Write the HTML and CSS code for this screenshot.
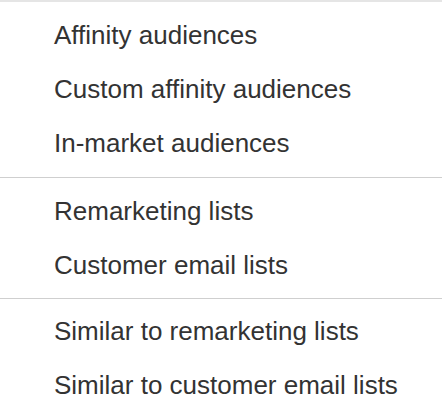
FILE: index.html
```html
<!DOCTYPE html>
<html>
<head>
<meta charset="utf-8">
<link rel="stylesheet" href="styles.css">
</head>
<body>
<div class="menu">
  <div class="section first">
    <div class="item">Affinity audiences</div>
    <div class="item">Custom affinity audiences</div>
    <div class="item">In-market audiences</div>
  </div>
  <div class="section">
    <div class="item">Remarketing lists</div>
    <div class="item">Customer email lists</div>
  </div>
  <div class="section last">
    <div class="item">Similar to remarketing lists</div>
    <div class="item">Similar to customer email lists</div>
  </div>
</div>
</body>
</html>
```
FILE: styles.css
```css
html, body {
  margin: 0;
  padding: 0;
  background: #fff;
}
.menu {
  width: 442px;
  border-top: 2px solid #e5e5e5;
  font-family: "Liberation Sans", Arial, sans-serif;
  font-size: 26px;
  color: #333;
}
.section {
  padding: 6px 0 6px 0;
  border-bottom: 1px solid #cfcfcf;
}
.section.first {
  padding-bottom: 7px;
}
.section.last {
  padding-top: 5px;
  border-bottom: none;
}
.item {
  padding-left: 54px;
  height: 54px;
  line-height: 54px;
  white-space: nowrap;
}
```
